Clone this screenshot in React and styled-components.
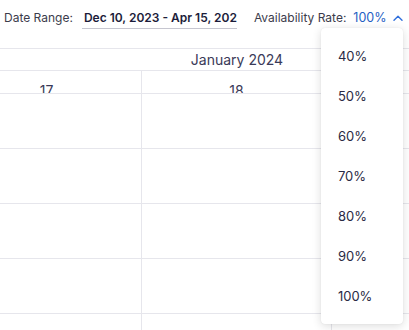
import React from 'react';
import styled, { createGlobalStyle } from 'styled-components';

const GlobalStyle = createGlobalStyle`
    body{
        margin: 0;
        background: #ffffff;
        font-family: Inter, "Noto Sans", sans-serif;
        overflow: hidden;
    }
`

const rates = ['40%', '50%', '60%', '70%', '80%', '90%', '100%'];
const days = ['17', '18', '19'];
const rows = [0, 1, 2, 3, 4];

function ChevronUp() {
    return (
        <svg width="10" height="6" viewBox="0 0 10 6" fill="none">
            <path d="M1 5.2 L5 1.2 L9 5.2" stroke="#2f6fdc" strokeWidth="1.4" strokeLinecap="round" strokeLinejoin="round" />
        </svg>
    );
}

export default function App() {
    return (
        <Page>
            <GlobalStyle />
            <Toolbar>
                <Label>Date Range:</Label>
                <DateField>Dec 10, 2023 - Apr 15, 2024</DateField>
                <RateBox>
                    <Label>Availability Rate:</Label>
                    <RateValue>100%</RateValue>
                    <ChevronUp />
                    <Menu>
                        {rates.map(r => <MenuItem key={r}>{r}</MenuItem>)}
                    </Menu>
                </RateBox>
            </Toolbar>
            <Calendar>
                <MonthRow>January 2024</MonthRow>
                {days.map(d => <DayCell key={d}><span>{d}</span></DayCell>)}
                {rows.map(r => days.map(d => <SlotCell key={r + '-' + d} />))}
            </Calendar>
        </Page>
    );
}

const Page = styled.div`
    width: 409px;
    height: 330px;
    overflow: hidden;
    position: relative;
`

const Toolbar = styled.div`
    height: 48px;
    display: flex;
    align-items: flex-start;
    padding: 10px 0 0 4px;
    box-sizing: border-box;
    font-size: 12px;
`

const Label = styled.span`
    color: #3c3c4c;
    line-height: 16px;
    white-space: nowrap;
`

const DateField = styled.div`
    margin-left: 9px;
    width: 155px;
    height: 19px;
    padding-left: 2px;
    box-sizing: border-box;
    border-bottom: 1px solid #c6c6d0;
    color: #1c1c3a;
    font-weight: 600;
    line-height: 16px;
    white-space: nowrap;
    overflow: hidden;
`

const RateBox = styled.div`
    margin-left: 17px;
    display: flex;
    align-items: center;
    position: relative;
    height: 16px;
    svg{
        margin-left: 7px;
    }
`

const RateValue = styled.span`
    margin-left: 7px;
    color: #1f5fc4;
    font-size: 12.5px;
    line-height: 16px;
`

const Menu = styled.div`
    position: absolute;
    top: 18px;
    left: 67px;
    width: 82px;
    padding: 8px 0;
    background: #ffffff;
    border-radius: 4px;
    box-shadow: 0 2px 10px rgba(0, 0, 0, 0.14), 0 0 1px rgba(0, 0, 0, 0.12);
    z-index: 10;
`

const MenuItem = styled.div`
    height: 40px;
    display: flex;
    align-items: center;
    padding-left: 17px;
    font-size: 13px;
    color: #2a2a44;
`

const Calendar = styled.div`
    margin-left: -48px;
    display: grid;
    grid-template-columns: repeat(3, 190px);
    grid-template-rows: 22px 23px;
    grid-auto-rows: 55px;
    border-top: 1px solid #e6e6ec;
`

const MonthRow = styled.div`
    grid-column: 1 / -1;
    border-bottom: 1px solid #e6e6ec;
    box-sizing: border-box;
    display: flex;
    align-items: center;
    justify-content: center;
    font-size: 14px;
    color: #3a3a58;
`

const DayCell = styled.div`
    border-bottom: 1px solid #e6e6ec;
    border-right: 1px solid #e6e6ec;
    box-sizing: border-box;
    overflow: hidden;
    display: flex;
    justify-content: center;
    span{
        margin-top: 12px;
        font-size: 14px;
        line-height: 16px;
        color: #3a3a58;
    }
`

const SlotCell = styled.div`
    border-bottom: 1px solid #e6e6ec;
    border-right: 1px solid #e6e6ec;
    box-sizing: border-box;
`
